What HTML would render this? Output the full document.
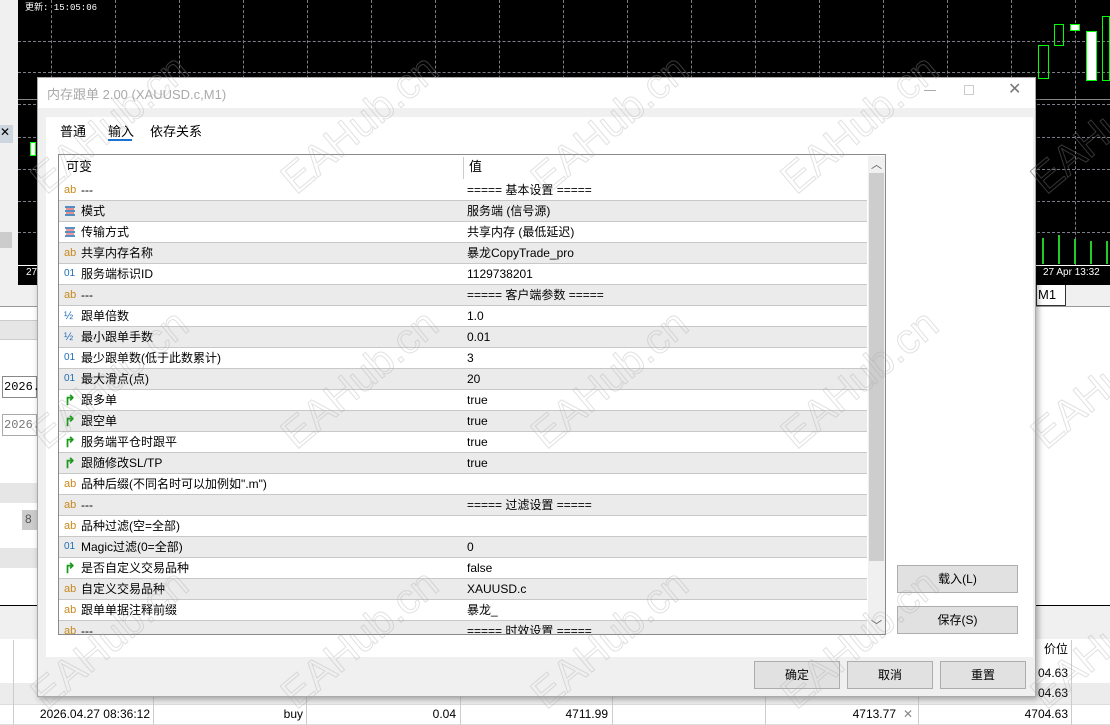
<!DOCTYPE html>
<html><head><meta charset="utf-8"><style>
*{margin:0;padding:0;box-sizing:border-box}
body{width:1110px;height:725px;overflow:hidden;position:relative;background:#fff;font-family:"Liberation Sans","Noto Sans CJK SC",sans-serif;font-size:12px;color:#000}
.abs{position:absolute}
.chart{left:18px;top:0;width:1092px;height:285px;background:#000}
.vl{position:absolute;top:0;height:265px;border-left:1px dashed #7a7f88}
.hl{position:absolute;left:0;width:1092px;border-top:1px dashed #7a7f88}
.dlg{left:37px;top:77px;width:999px;height:620px;background:#f0f0f0;border:1px solid #aaa;box-shadow:2px 2px 6px rgba(0,0,0,.35)}
.title{left:0;top:0;width:997px;height:30px;background:#fff;color:#aaa;font-size:13px;padding:6px 0 0 9px}
.panel{left:8px;top:39px;width:987px;height:540px;background:#fff}
.tbl{left:20px;top:76px;width:828px;height:481px;border:1px solid #8a8a8a;background:#fff;overflow:hidden}
.row{position:absolute;left:0;width:808px;height:21px;border-bottom:1px solid #c8c8c8;font-size:12px;line-height:20px}
.g{background:#ebebeb}
.n{position:absolute;left:22px}
.v{position:absolute;left:408px}
.ic{position:absolute;left:5px;width:14px;font-size:11px}
.ab{color:#c8891c}
.o1{color:#1f6fb5;font-size:10px}
.ar{color:#1a9a1a;font-size:14px;font-weight:bold}
.btn{position:absolute;background:#e1e1e1;border:1px solid #adadad;text-align:center;font-size:12px}
.wm{position:absolute;font-size:42px;font-family:"Liberation Sans",sans-serif;color:transparent;-webkit-text-stroke:1px rgba(170,170,170,.35);transform:rotate(-40deg);white-space:nowrap;pointer-events:none}
.bt{position:absolute;height:20px;line-height:20px;font-size:12px;text-align:right}
</style></head><body>

<div class="abs" style="left:0;top:0;width:18px;height:285px;background:#f0f0f0"></div>
<div class="abs" style="left:0;top:125px;width:13px;height:18px;background:#cdd5de;font-size:12px">✕</div>
<div class="abs" style="left:0;top:232px;width:12px;height:16px;background:#ccc"></div>
<div class="abs" style="left:0;top:285px;width:37px;height:440px;background:#fff"></div>
<div class="abs" style="left:0;top:320px;width:37px;height:20px;background:#e6e6e6;border-top:1px solid #ccc;border-bottom:1px solid #ccc"></div>
<div class="abs" style="left:2px;top:376px;width:35px;height:22px;border:1px solid #888;font-family:'Liberation Mono';font-size:12px;padding:3px 1px">2026.0</div>
<div class="abs" style="left:2px;top:414px;width:35px;height:22px;border:1px solid #aaa;color:#777;font-family:'Liberation Mono';font-size:12px;padding:3px 1px">2026.0</div>
<div class="abs" style="left:0;top:483px;width:37px;height:20px;background:#e6e6e6"></div>
<div class="abs" style="left:22px;top:510px;width:15px;height:20px;background:#ccc;color:#555;padding:2px 3px">8</div>
<div class="abs" style="left:0;top:548px;width:37px;height:20px;background:#e6e6e6"></div>
<div class="abs" style="left:0;top:605px;width:1110px;height:1px;background:#000"></div>
<div class="abs" style="left:0;top:606px;width:1110px;height:33px;background:#f0f0f0"></div>

<div class="abs chart">
<div class="hl" style="top:41px"></div><div class="hl" style="top:72px"></div><div class="hl" style="top:104px"></div><div class="hl" style="top:137px"></div><div class="hl" style="top:169px"></div><div class="hl" style="top:201px"></div><div class="hl" style="top:232px"></div>
<div class="abs" style="left:0;top:99px;width:1092px;height:1px;background:#888"></div>
<div class="vl" style="left:33px"></div><div class="vl" style="left:97px"></div><div class="vl" style="left:161px"></div><div class="vl" style="left:225px"></div><div class="vl" style="left:289px"></div><div class="vl" style="left:353px"></div><div class="vl" style="left:417px"></div><div class="vl" style="left:481px"></div><div class="vl" style="left:545px"></div><div class="vl" style="left:609px"></div><div class="vl" style="left:673px"></div><div class="vl" style="left:737px"></div><div class="vl" style="left:801px"></div><div class="vl" style="left:865px"></div><div class="vl" style="left:929px"></div><div class="vl" style="left:993px"></div><div class="vl" style="left:1057px"></div>
<div class="abs" style="left:7px;top:0;color:#fff;font-size:9px;font-family:'Liberation Mono'">更新: 15:05:06</div>
<div class="abs" style="left:12px;top:142px;width:6px;height:14px;border:1px solid #0f0;background:#fff"></div>
<div class="abs" style="left:1020px;top:45px;width:11px;height:34px;border:1px solid #0f0"></div>
<div class="abs" style="left:1036px;top:24px;width:10px;height:22px;border:1px solid #0f0"></div>
<div class="abs" style="left:1052px;top:24px;width:10px;height:7px;border:1px solid #0f0;background:#fff"></div>
<div class="abs" style="left:1068px;top:31px;width:11px;height:50px;border:1px solid #0f0;background:#fff"></div>
<div class="abs" style="left:1084px;top:16px;width:8px;height:65px;border:1px solid #0f0"></div>
<div class="abs" style="left:1024px;top:238px;width:2px;height:26px;background:#2c2"></div>
<div class="abs" style="left:1040px;top:235px;width:2px;height:29px;background:#2c2"></div>
<div class="abs" style="left:1056px;top:239px;width:2px;height:25px;background:#2c2"></div>
<div class="abs" style="left:1072px;top:241px;width:2px;height:23px;background:#2c2"></div>
<div class="abs" style="left:1088px;top:241px;width:2px;height:23px;background:#2c2"></div>
<div class="abs" style="left:0;top:265px;width:1092px;height:1px;background:#fff"></div>
<div class="abs" style="left:8px;top:267px;color:#fff;font-size:10px">27 A</div>
<div class="abs" style="left:1025px;top:267px;color:#fff;font-size:10px">27 Apr 13:32</div>
</div>
<div class="abs" style="left:0;top:285px;width:1110px;height:22px;background:#f0f0f0;border-bottom:1px solid #999"></div>
<div class="abs" style="left:1036px;top:285px;width:30px;height:21px;background:#fff;border:1px solid #333;border-top:none;padding:2px 0 0 1px;font-size:13px">M1</div>

<div class="abs" style="left:0;top:640px;width:1110px;height:85px;background:#fff"></div>
<div class="abs" style="left:0;top:683px;width:1110px;height:21px;background:#ececec"></div>
<div class="abs" style="left:0;top:704px;width:1110px;height:1px;background:#ddd"></div>
<div class="abs" style="left:0;top:724px;width:1110px;height:1px;background:#ddd"></div>
<div class="abs" style="left:13px;top:640px;width:1px;height:85px;background:#ccc"></div>
<div class="abs" style="left:153px;top:683px;width:1px;height:42px;background:#ccc"></div>
<div class="abs" style="left:306px;top:683px;width:1px;height:42px;background:#ccc"></div>
<div class="abs" style="left:460px;top:683px;width:1px;height:42px;background:#ccc"></div>
<div class="abs" style="left:612px;top:683px;width:1px;height:42px;background:#ccc"></div>
<div class="abs" style="left:765px;top:683px;width:1px;height:42px;background:#ccc"></div>
<div class="abs" style="left:918px;top:683px;width:1px;height:42px;background:#ccc"></div>
<div class="abs" style="left:1071px;top:640px;width:1px;height:85px;background:#ccc"></div>
<div class="bt" style="left:0;top:704px;width:150px">2026.04.27 08:36:12</div>
<div class="bt" style="left:160px;top:704px;width:143px">buy</div>
<div class="bt" style="left:310px;top:704px;width:146px">0.04</div>
<div class="bt" style="left:460px;top:704px;width:148px">4711.99</div>
<div class="bt" style="left:760px;top:704px;width:136px">4713.77</div>
<div class="abs" style="left:903px;top:707px;color:#888;font-size:12px">✕</div>
<div class="bt" style="left:960px;top:704px;width:108px">4704.63</div>
<div class="bt" style="left:1036px;top:683px;width:32px">04.63</div>
<div class="bt" style="left:1036px;top:663px;width:32px">04.63</div>
<div class="bt" style="left:1036px;top:639px;width:32px">价位</div>

<div class="abs dlg">
<div class="abs title">内存跟单 2.00 (XAUUSD.c,M1)</div>
<div class="abs" style="left:886px;top:12px;width:12px;height:1px;background:#aaa"></div>
<div class="abs" style="left:926px;top:7px;width:10px;height:10px;border:1px solid #ccc"></div>
<div class="abs" style="left:970px;top:1px;color:#777;font-size:16px">✕</div>
<div class="abs panel">
<div class="abs" style="left:14px;top:4px;font-size:13px">普通</div>
<div class="abs" style="left:62px;top:4px;font-size:13px">输入</div>
<div class="abs" style="left:62px;top:22px;width:24px;height:2px;background:#1a73d0"></div>
<div class="abs" style="left:104px;top:4px;font-size:13px">依存关系</div>
</div>
<div class="abs tbl">
<div class="row" style="top:0;height:25px;border-bottom:none;line-height:24px"><span class="n" style="left:7px;font-size:13px">可变</span><span style="position:absolute;left:404px;top:2px;height:22px;border-left:1px solid #ccc"></span><span class="v" style="left:410px;font-size:13px">值</span></div>
<div class="row" style="top:25px"><span class="ic ab">ab</span><span class="n">---</span><span class="v">===== 基本设置 =====</span></div>
<div class="row g" style="top:46px"><svg class="ic" style="top:5px" width="12" height="10"><path d="M1 1h10M1 5h10M1 9h10" stroke="#1f6fb5" stroke-width="1.5"/><path d="M2 3h8M2 7h8" stroke="#d33" stroke-width="1"/></svg><span class="n">模式</span><span class="v">服务端 (信号源)</span></div>
<div class="row" style="top:67px"><svg class="ic" style="top:5px" width="12" height="10"><path d="M1 1h10M1 5h10M1 9h10" stroke="#1f6fb5" stroke-width="1.5"/><path d="M2 3h8M2 7h8" stroke="#d33" stroke-width="1"/></svg><span class="n">传输方式</span><span class="v">共享内存 (最低延迟)</span></div>
<div class="row g" style="top:88px"><span class="ic ab">ab</span><span class="n">共享内存名称</span><span class="v">暴龙CopyTrade_pro</span></div>
<div class="row" style="top:109px"><span class="ic o1">01</span><span class="n">服务端标识ID</span><span class="v">1129738201</span></div>
<div class="row g" style="top:130px"><span class="ic ab">ab</span><span class="n">---</span><span class="v">===== 客户端参数 =====</span></div>
<div class="row" style="top:151px"><span class="ic" style="color:#1f6fb5">½</span><span class="n">跟单倍数</span><span class="v">1.0</span></div>
<div class="row g" style="top:172px"><span class="ic" style="color:#1f6fb5">½</span><span class="n">最小跟单手数</span><span class="v">0.01</span></div>
<div class="row" style="top:193px"><span class="ic o1">01</span><span class="n">最少跟单数(低于此数累计)</span><span class="v">3</span></div>
<div class="row g" style="top:214px"><span class="ic o1">01</span><span class="n">最大滑点(点)</span><span class="v">20</span></div>
<div class="row" style="top:235px"><span class="ic ar">↱</span><span class="n">跟多单</span><span class="v">true</span></div>
<div class="row g" style="top:256px"><span class="ic ar">↱</span><span class="n">跟空单</span><span class="v">true</span></div>
<div class="row" style="top:277px"><span class="ic ar">↱</span><span class="n">服务端平仓时跟平</span><span class="v">true</span></div>
<div class="row g" style="top:298px"><span class="ic ar">↱</span><span class="n">跟随修改SL/TP</span><span class="v">true</span></div>
<div class="row" style="top:319px"><span class="ic ab">ab</span><span class="n">品种后缀(不同名时可以加例如".m")</span><span class="v"></span></div>
<div class="row g" style="top:340px"><span class="ic ab">ab</span><span class="n">---</span><span class="v">===== 过滤设置 =====</span></div>
<div class="row" style="top:361px"><span class="ic ab">ab</span><span class="n">品种过滤(空=全部)</span><span class="v"></span></div>
<div class="row g" style="top:382px"><span class="ic o1">01</span><span class="n">Magic过滤(0=全部)</span><span class="v">0</span></div>
<div class="row" style="top:403px"><span class="ic ar">↱</span><span class="n">是否自定义交易品种</span><span class="v">false</span></div>
<div class="row g" style="top:424px"><span class="ic ab">ab</span><span class="n">自定义交易品种</span><span class="v">XAUUSD.c</span></div>
<div class="row" style="top:445px"><span class="ic ab">ab</span><span class="n">跟单单据注释前缀</span><span class="v">暴龙_</span></div>
<div class="row g" style="top:466px"><span class="ic ab">ab</span><span class="n">---</span><span class="v">===== 时效设置 =====</span></div>
<div class="abs" style="left:809px;top:1px;width:17px;height:478px;background:#f0f0f0"></div>
<div class="abs" style="left:810px;top:18px;width:15px;height:388px;background:#cdcdcd"></div>
<div class="abs" style="left:812px;top:1px;font-size:11px;color:#555">︿</div>
<div class="abs" style="left:812px;top:462px;font-size:11px;color:#555">﹀</div>
</div>
<div class="btn" style="left:859px;top:487px;width:121px;height:28px;line-height:26px">载入(L)</div>
<div class="btn" style="left:859px;top:528px;width:121px;height:28px;line-height:26px">保存(S)</div>
<div class="btn" style="left:716px;top:583px;width:86px;height:28px;line-height:26px">确定</div>
<div class="btn" style="left:809px;top:583px;width:86px;height:28px;line-height:26px">取消</div>
<div class="btn" style="left:902px;top:583px;width:86px;height:28px;line-height:26px">重置</div>
</div>

<div class="wm" style="left:15px;top:100px">EAHub.cn</div>
<div class="wm" style="left:265px;top:100px">EAHub.cn</div>
<div class="wm" style="left:515px;top:100px">EAHub.cn</div>
<div class="wm" style="left:765px;top:100px">EAHub.cn</div>
<div class="wm" style="left:1015px;top:100px;-webkit-text-stroke:1px rgba(90,90,90,.6)">EAHub.cn</div>
<div class="wm" style="left:15px;top:355px">EAHub.cn</div>
<div class="wm" style="left:265px;top:355px">EAHub.cn</div>
<div class="wm" style="left:515px;top:355px">EAHub.cn</div>
<div class="wm" style="left:765px;top:355px">EAHub.cn</div>
<div class="wm" style="left:1015px;top:355px">EAHub.cn</div>
<div class="wm" style="left:15px;top:615px">EAHub.cn</div>
<div class="wm" style="left:265px;top:615px">EAHub.cn</div>
<div class="wm" style="left:515px;top:615px">EAHub.cn</div>
<div class="wm" style="left:765px;top:615px">EAHub.cn</div>
<div class="wm" style="left:1015px;top:615px">EAHub.cn</div>
</body></html>
